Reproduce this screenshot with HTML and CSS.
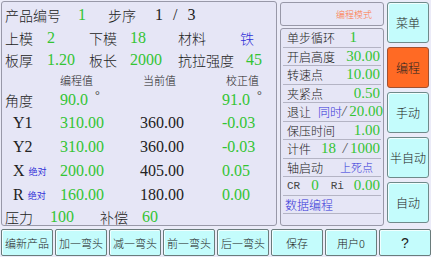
FILE: index.html
```html
<!DOCTYPE html>
<html lang="zh">
<head>
    <meta charset="UTF-8">
    <title>编程模式</title>
    <link rel="stylesheet" href="styles.css">
</head>
<body>
<div class="screen">
    <div class="main">
        <!-- left: product parameters -->
        <div class="panel params">
            <div class="row r1">
                <span>产品编号</span><span class="num green">1</span><span>步序</span><span class="num step">1 / 3</span>
            </div>
            <div class="row r2">
                <span>上模</span><span class="num green">2</span><span>下模</span><span class="num green">18</span><span>材料</span><span class="blue">铁</span>
            </div>
            <div class="row r3">
                <span>板厚</span><span class="num green">1.20</span><span>板长</span><span class="num green">2000</span><span>抗拉强度</span><span class="num green">45</span>
            </div>
            <div class="row head">
                <span></span><span>编程值</span><span>当前值</span><span>校正值</span>
            </div>
            <div class="row data first">
                <span>角度</span><span class="num green">90.0<i class="deg">°</i></span><span></span><span class="num green">91.0<i class="deg">°</i></span>
            </div>
            <div class="row data">
                <span class="num axis">Y1</span><span class="num green">310.00</span><span class="num">360.00</span><span class="num green">-0.03</span>
            </div>
            <div class="row data">
                <span class="num axis">Y2</span><span class="num green">310.00</span><span class="num">360.00</span><span class="num green">-0.03</span>
            </div>
            <div class="row data">
                <span class="num axis">X<b class="abs">绝对</b></span><span class="num green">200.00</span><span class="num">405.00</span><span class="num green">0.05</span>
            </div>
            <div class="row data">
                <span class="num axis">R<b class="abs">绝对</b></span><span class="num green">160.00</span><span class="num">180.00</span><span class="num green">0.00</span>
            </div>
            <div class="row r4">
                <span>压力</span><span class="num green">100</span><span>补偿</span><span class="num green">60</span>
            </div>
        </div>

        <!-- middle: mode and step settings -->
        <div class="middle">
            <div class="panel mode"><span>编程模式</span></div>
            <div class="panel list">
                <div class="item"><span>单步循环</span><span class="num green one">1</span></div>
                <div class="item"><span>开启高度</span><span class="num green">30.00</span></div>
                <div class="item"><span>转速点</span><span class="num green">10.00</span></div>
                <div class="item"><span>夹紧点</span><span class="num green">0.50</span></div>
                <div class="item"><span>退让</span><span class="blue opt">同时</span><span class="slash">/</span><span class="num green">20.00</span></div>
                <div class="item"><span>保压时间</span><span class="num green">1.00</span></div>
                <div class="item"><span>计件</span><span class="num green cnt">18</span><span class="slash">/</span><span class="num green">1000</span></div>
                <div class="item"><span>轴启动</span><span class="blue dead">上死点</span></div>
                <div class="item cr"><span class="tag">CR</span><span class="num green crv">0</span><span class="tag">Ri</span><span class="num green">0.00</span></div>
                <div class="item"><span class="blue link">数据编程</span></div>
                <div class="item last"></div>
            </div>
        </div>

        <!-- right: mode buttons -->
        <div class="modes">
            <div class="btn">菜单</div>
            <div class="btn active">编程</div>
            <div class="btn">手动</div>
            <div class="btn">半自动</div>
            <div class="btn">自动</div>
        </div>
    </div>

    <div class="toolbar">
        <div class="tool">编新产品</div>
        <div class="tool">加一弯头</div>
        <div class="tool">减一弯头</div>
        <div class="tool">前一弯头</div>
        <div class="tool">后一弯头</div>
        <div class="tool">保存</div>
        <div class="tool">用户0</div>
        <div class="tool q">?</div>
    </div>
</div>
</body>
</html>
```

FILE: styles.css
```css
body { margin: 0; width: 431px; height: 257px; overflow: hidden; background: #ebebf8; color: #222; font-family: "Noto Sans CJK SC", sans-serif; font-weight: 300; }
.screen { display: flex; flex-direction: column; height: 257px; }
.main { display: flex; height: 228px; padding: 1px 0 0 1px; gap: 3px; box-sizing: border-box; }

.panel { background: #e6e6f6; border: 1px solid #9898a8; border-radius: 3px; box-sizing: border-box; }
.num { font-family: "Liberation Serif", serif; font-size: 16px; font-weight: normal; }
.green { color: #33c433; }
.blue { color: #3232d8; }

/* left panel */
.params { width: 276px; height: 225px; padding: 2px 0 0 3px; display: flex; flex-direction: column; }
.row { display: grid; align-items: center; font-size: 14px; white-space: nowrap; }
.r1 { height: 22px; grid-template-columns: 73px 30px 47px auto; }
.r1 .step { word-spacing: 6px; }
.r2 { height: 23px; grid-template-columns: 42px 42px 41px 48px 62px auto; }
.r3 { height: 22px; grid-template-columns: 42px 42px 41px 48px 68px auto; }
.head { height: 18px; font-size: 11px; grid-template-columns: 55px 83px 83px auto; }
.data { height: 24px; grid-template-columns: 55px 80px 82px auto; }
.data.first { height: 22px; }
.r4 { height: 17px; grid-template-columns: 45px 50px 42px auto; }
.axis { padding-left: 8px; color: #222; }
.abs { font-family: "Noto Sans CJK SC", sans-serif; font-size: 9px; font-weight: normal; color: #3232d8; margin-left: 4px; position: relative; top: -1px; }
.deg { font-style: normal; font-size: 12px; color: #444; margin-left: 7px; position: relative; top: -6px; }

/* middle column */
.middle { width: 104px; padding-top: 1px; display: flex; flex-direction: column; gap: 2px; }
.mode { height: 24px; display: flex; align-items: center; justify-content: flex-end; padding-right: 11px; font-size: 9px; color: #ff7744; }
.list { height: 198px; padding: 0 2px; }
.item { height: 18.5px; display: flex; align-items: center; border-bottom: 1px solid #b4b4c4; box-sizing: border-box; padding: 0 1px 0 4px; font-size: 12px; white-space: nowrap; }
.item .num { margin-left: auto; font-size: 15px; }
.item .one { margin-right: 23px; }
.item .opt { margin-left: 7px; }
.item .slash { margin-left: auto; color: #555; font-family: "Liberation Serif", serif; font-size: 15px; font-style: italic; }
.item .cnt { margin-left: 10px; }
.item .slash + .num { margin-left: 3px; }
.item .dead { margin-left: auto; margin-right: 7px; font-size: 11px; }
.cr .tag { font-family: "Liberation Mono", monospace; font-size: 11px; color: #444; font-weight: normal; }
.cr .crv { margin-left: 11px; margin-right: 12px; }
.cr .tag + .num:last-child { margin-left: auto; }
.item .link { margin-left: -2px; }
.item.last { border-bottom: none; height: 11px; }

/* right buttons */
.modes { width: 42px; padding-top: 1px; display: flex; flex-direction: column; gap: 4px; }
.btn { height: 41px; display: flex; align-items: center; justify-content: center; background: #c4fcfc; border: 1px solid #6f8a8a; border-radius: 3px; box-shadow: inset 1px 1px 0 #f0ffff; box-sizing: border-box; font-size: 12px; color: #222; }
.btn.active { background: #ff6a24; border-color: #a05030; box-shadow: none; }

/* bottom toolbar */
.toolbar { display: flex; gap: 2px; padding: 1px 0 0 1px; height: 29px; box-sizing: border-box; }
.tool { width: 52px; height: 27px; display: flex; align-items: center; justify-content: center; background: #c4fcfc; border: 1px solid #6a7c7c; border-radius: 2px; box-shadow: inset 1px 1px 0 #f0ffff; box-sizing: border-box; font-size: 11px; color: #222; }
.tool.q { font-family: "Liberation Sans", sans-serif; font-size: 14px; }
```
